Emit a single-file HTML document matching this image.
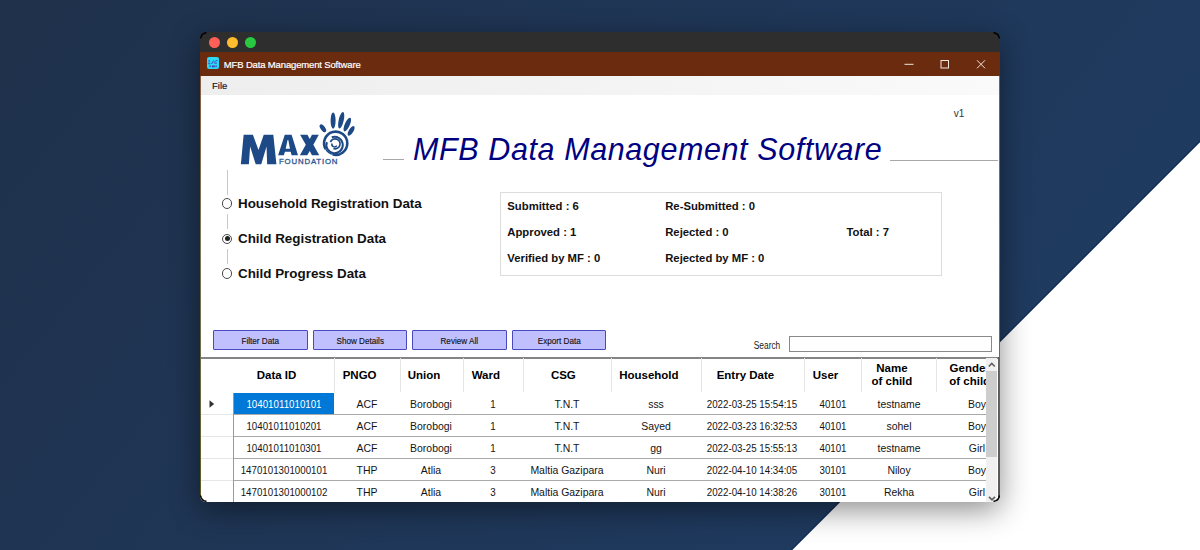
<!DOCTYPE html>
<html><head><meta charset="utf-8">
<style>
*{margin:0;padding:0;box-sizing:border-box}
html,body{width:1200px;height:550px;overflow:hidden}
body{position:relative;font-family:"Liberation Sans",sans-serif;background:linear-gradient(129deg,#1f314b,#1f3d65)}
.abs{position:absolute}
#tri{position:absolute;left:0;top:0;width:1200px;height:550px}
#win{position:absolute;left:200px;top:32px;width:800px;height:470px;background:linear-gradient(#2e2e2e 0,#2e2e2e 20px,#fff 20px);border-radius:6px;overflow:hidden;box-shadow:0 8px 30px rgba(0,0,0,0.45)}
#mac{position:absolute;left:0;top:0;width:800px;height:20px;background:#2e2e2e}
.dot{position:absolute;top:5px;width:11px;height:11px;border-radius:50%}
#tb{position:absolute;left:0;top:20px;width:800px;height:24px;background:#6b2b0e}
#menu{position:absolute;left:1px;top:44px;width:798px;height:19px;background:linear-gradient(to right,#eeeeee,#f2f2f2 40%,#fafafa)}
.t{position:absolute;white-space:nowrap;line-height:1}
.hd{font-weight:bold;font-size:11.5px;color:#000;text-align:center}
.dt{font-size:11px;color:#141414;text-align:center;transform:scaleX(0.885)}
.dt.sel{color:#fff}
.rb{font-weight:bold;font-size:13.4px;color:#111}
.st{font-weight:bold;font-size:11.3px;color:#111}
.btn{position:absolute;top:298.2px;height:19.8px;width:94.5px;background:#c0c0ff;border:1px solid #4a4ac0;border-radius:1px}
.btn span{position:absolute;left:0;right:0;top:4.8px;text-align:center;font-size:9.8px;color:#111;line-height:1;transform:scaleX(0.83);-webkit-text-stroke:0.15px #111}
.radio{position:absolute;width:10.4px;height:10.4px;border:1px solid #4a4a4a;border-radius:50%;background:#fff}
.vl{position:absolute;left:27px;width:1px;background:#c8c8c8}
</style></head><body>
<svg id="tri" viewBox="0 0 1200 550"><line x1="1201" y1="140.3" x2="790.3" y2="551" stroke="#142c55" stroke-width="1.5"/><polygon points="1200,142.3 1200,550 792.3,550" fill="#fff"/></svg>
<div id="win">
  <div id="mac">
    <div class="dot" style="left:9px;background:#fe5f57"></div>
    <div class="dot" style="left:27px;background:#febc2e"></div>
    <div class="dot" style="left:45px;background:#28c840"></div>
  </div>
  <div id="tb">
    <svg class="abs" style="left:7px;top:5px" width="12" height="12" viewBox="0 0 12 12"><rect x="0" y="0" width="12" height="12" rx="2" fill="#2ad9f8"/><g fill="none" stroke="#4a40b8" stroke-width="0.9"><path d="M2,3 L2.3,5.2 M1.5,5.8 A0.8,0.8 0 1 0 3,6"/><path d="M4.5,7 L6.5,3.5"/><path d="M6.8,6 Q8.5,3 10.5,3.5 M7.5,6.3 L10,6"/></g><g fill="#4a40b8"><rect x="2.5" y="8.3" width="1.2" height="1.8"/><rect x="4.8" y="8.5" width="3" height="1.8"/><rect x="8.5" y="8.3" width="1.2" height="1.8"/></g></svg>
    <div class="t" style="left:23.8px;top:7.5px;font-size:9.5px;letter-spacing:-0.15px;color:#fff;-webkit-text-stroke:0.2px #fff">MFB Data Management Software</div>
    <svg class="abs" style="left:700px;top:0" width="100" height="24">
      <line x1="704.5" y1="12.3" x2="713.5" y2="12.3" stroke="#f0e6e0" stroke-width="1" transform="translate(-700 0)"/>
      <rect x="41" y="8.5" width="7.5" height="7.5" fill="none" stroke="#f0e6e0" stroke-width="1"/>
      <path d="M77,8.3 L85,16.3 M85,8.3 L77,16.3" stroke="#f0e6e0" stroke-width="1"/>
    </svg>
  </div>
  <div id="menu">
    <div class="t" style="left:11px;top:4.8px;font-size:9.5px;color:#101028;-webkit-text-stroke:0.15px #101028">File</div>
  </div>
  <svg class="abs" style="left:0;top:0" width="800" height="200" viewBox="200 32 800 200">
<g fill="#1d4a87">
<polygon points="240.86,164.16 243.64,134.78 252.91,134.78 258.48,149.93 263.74,134.78 273.32,134.78 276.41,164.16 267.14,164.16 266.52,146.53 261.26,164.16 255.70,164.16 250.13,146.53 248.89,164.16"/>
<path fill-rule="evenodd" d="M278.13,155.17 L284.75,134.84 L291.6,134.84 L297.99,155.17 L291.6,155.17 L290.66,151.86 L284.98,151.86 L283.8,155.17 Z M285.69,148.78 L287.58,140.04 L288.29,140.04 L289.95,148.78 Z"/>
<polygon points="300.11,134.84 307.44,134.84 309.8,139.09 311.93,134.84 318.79,134.84 313.35,144.77 319.26,155.17 311.93,155.17 309.8,150.91 307.2,155.17 299.88,155.17 305.79,144.77"/>
<ellipse cx="322.9" cy="128.3" rx="2.3" ry="4.5" transform="rotate(-35 322.9 128.3)"/>
<ellipse cx="333.1" cy="120.6" rx="2.5" ry="8.1"/>
<ellipse cx="341.2" cy="120.3" rx="2.5" ry="8.4" transform="rotate(13 341.2 120.3)"/>
<ellipse cx="347.3" cy="124.6" rx="2.5" ry="7.4" transform="rotate(24 347.3 124.6)"/>
<ellipse cx="351.1" cy="130.9" rx="2.3" ry="5.5" transform="rotate(32 351.1 130.9)"/>
</g>
<g fill="none" stroke="#1d4a87">
<path d="M325.65,149.1 A11.6,11.6 0 1 1 332.7,154.5" stroke-width="2.6"/>
<path d="M332.7,154.5 A11.6,11.6 0 0 1 325.65,149.1" stroke-width="1.2"/>
<path d="M331.8,137.29 A8.2,8.2 0 1 1 326.89,142.2" stroke-width="2.0"/>
<path d="M330.4,142.09 A5.0,5.0 0 1 1 333.39,148.5" stroke-width="1.7"/>
<path d="M336.75,145.6 A2.6,2.6 0 0 1 332.06,143.41" stroke-width="1.5"/>
</g>
<text x="279" y="164.3" font-family="Liberation Sans" font-size="7.8" fill="#2a5591" stroke="#2a5591" stroke-width="0.3" textLength="58.5" lengthAdjust="spacing">FOUNDATION</text>
</svg>

  <div class="abs" style="left:183px;top:127px;width:21px;height:1px;background:#a8a8a8"></div>
  <div class="t" style="left:213px;top:101.8px;font-size:30.5px;letter-spacing:0.6px;font-style:italic;color:#000080">MFB Data Management Software</div>
  <div class="abs" style="left:690px;top:128px;width:108px;height:1px;background:#a8a8a8"></div>
  <div class="t" style="left:753.8px;top:77px;font-size:10px;color:#333">v1</div>

  <div class="vl" style="top:137.5px;height:25px"></div>
  <div class="vl" style="top:182px;height:14.5px"></div>
  <div class="vl" style="top:217px;height:15px"></div>
  <div class="radio" style="left:22.1px;top:166.4px"></div>
  <div class="radio" style="left:22.1px;top:201.6px"><div class="abs" style="left:1.7px;top:1.7px;width:5px;height:5px;border-radius:50%;background:#222"></div></div>
  <div class="radio" style="left:22.1px;top:236.3px"></div>
  <div class="t rb" style="left:38px;top:165.3px">Household Registration Data</div>
  <div class="t rb" style="left:38px;top:200.3px">Child Registration Data</div>
  <div class="t rb" style="left:38px;top:234.8px">Child Progress Data</div>

  <div class="abs" style="left:300px;top:160px;width:442px;height:84px;border:1px solid #dcdcdc"></div>
  <div class="t st" style="left:307.3px;top:168.5px">Submitted : 6</div>
  <div class="t st" style="left:465.2px;top:168.5px">Re-Submitted : 0</div>
  <div class="t st" style="left:307.3px;top:194.5px">Approved : 1</div>
  <div class="t st" style="left:465.2px;top:194.5px">Rejected : 0</div>
  <div class="t st" style="left:646.5px;top:194.5px">Total : 7</div>
  <div class="t st" style="left:307.3px;top:220.5px">Verified by MF : 0</div>
  <div class="t st" style="left:465.2px;top:220.5px">Rejected by MF : 0</div>

  <div class="btn" style="left:13.3px"><span>Filter Data</span></div>
  <div class="btn" style="left:112.7px"><span>Show Details</span></div>
  <div class="btn" style="left:212.3px"><span>Review All</span></div>
  <div class="btn" style="left:311.5px"><span>Export Data</span></div>
  <div class="t" style="left:550px;top:308.5px;width:34px;text-align:center;font-size:10px;transform:scaleX(0.835);color:#222">Search</div>
  <div class="abs" style="left:588.5px;top:304px;width:203px;height:16px;border:1px solid #8a8a8a;background:#fff"></div>
  <div id="grid" class="abs" style="left:1px;top:325px;width:798px;height:145px;overflow:hidden">
<div class="abs" style="left:0;top:0;width:800px;height:2px;background:#858585"></div>
<div class="t hd" style="left:15.549999999999997px;width:120px;top:12.600000000000001px">Data ID</div>
<div class="abs" style="left:132.6px;top:1px;width:1px;height:34px;background:#e4e4e4"></div>
<div class="t hd" style="left:98.6px;width:120px;top:12.600000000000001px">PNGO</div>
<div class="abs" style="left:198.6px;top:1px;width:1px;height:34px;background:#e4e4e4"></div>
<div class="t hd" style="left:163.05px;width:120px;top:12.600000000000001px">Union</div>
<div class="abs" style="left:261.5px;top:1px;width:1px;height:34px;background:#e4e4e4"></div>
<div class="t hd" style="left:224.85000000000002px;width:120px;top:12.600000000000001px">Ward</div>
<div class="abs" style="left:322.2px;top:1px;width:1px;height:34px;background:#e4e4e4"></div>
<div class="t hd" style="left:302.35px;width:120px;top:12.600000000000001px">CSG</div>
<div class="abs" style="left:409.5px;top:1px;width:1px;height:34px;background:#e4e4e4"></div>
<div class="t hd" style="left:387.9px;width:120px;top:12.600000000000001px">Household</div>
<div class="abs" style="left:500.3px;top:1px;width:1px;height:34px;background:#e4e4e4"></div>
<div class="t hd" style="left:484.45000000000005px;width:120px;top:12.600000000000001px">Entry Date</div>
<div class="abs" style="left:602.6px;top:1px;width:1px;height:34px;background:#e4e4e4"></div>
<div class="t hd" style="left:564.5px;width:120px;top:12.600000000000001px">User</div>
<div class="abs" style="left:660.4px;top:1px;width:1px;height:34px;background:#e4e4e4"></div>
<div class="t hd" style="left:630.9px;width:120px;top:6.3px">Name</div>
<div class="t hd" style="left:630.9px;width:120px;top:19.3px">of child</div>
<div class="abs" style="left:735.4px;top:1px;width:1px;height:34px;background:#e4e4e4"></div>
<div class="t hd" style="left:708.7px;width:120px;top:6.3px">Gender</div>
<div class="t hd" style="left:708.7px;width:120px;top:19.3px">of child</div>
<div class="abs" style="left:0;top:57.0px;width:32.5px;height:1px;background:#e6e6e6"></div>
<div class="abs" style="left:32.5px;top:57.0px;width:752.5px;height:1px;background:#a9a9a9"></div>
<div class="abs" style="left:32.5px;top:36.0px;width:100.10000000000002px;height:21px;background:#0078d7"></div>
<div class="t dt sel" style="left:12.549999999999997px;width:140px;top:41.5px;transform:scaleX(0.885)">10401011010101</div>
<div class="t dt " style="left:95.6px;width:140px;top:41.5px;transform:scaleX(0.95)">ACF</div>
<div class="t dt " style="left:160.05px;width:140px;top:41.5px;transform:scaleX(0.95)">Borobogi</div>
<div class="t dt " style="left:221.85000000000002px;width:140px;top:41.5px;transform:scaleX(0.885)">1</div>
<div class="t dt " style="left:295.85px;width:140px;top:41.5px;transform:scaleX(0.95)">T.N.T</div>
<div class="t dt " style="left:384.9px;width:140px;top:41.5px;transform:scaleX(0.95)">sss</div>
<div class="t dt " style="left:481.45000000000005px;width:140px;top:41.5px;transform:scaleX(0.885)">2022-03-25 15:54:15</div>
<div class="t dt " style="left:561.5px;width:140px;top:41.5px;transform:scaleX(0.885)">40101</div>
<div class="t dt " style="left:627.9px;width:140px;top:41.5px;transform:scaleX(0.95)">testname</div>
<div class="t dt " style="left:705.7px;width:140px;top:41.5px;transform:scaleX(0.95)">Boy</div>
<div class="abs" style="left:0;top:79.0px;width:32.5px;height:1px;background:#e6e6e6"></div>
<div class="abs" style="left:32.5px;top:79.0px;width:752.5px;height:1px;background:#a9a9a9"></div>
<div class="t dt " style="left:12.549999999999997px;width:140px;top:63.5px;transform:scaleX(0.885)">10401011010201</div>
<div class="t dt " style="left:95.6px;width:140px;top:63.5px;transform:scaleX(0.95)">ACF</div>
<div class="t dt " style="left:160.05px;width:140px;top:63.5px;transform:scaleX(0.95)">Borobogi</div>
<div class="t dt " style="left:221.85000000000002px;width:140px;top:63.5px;transform:scaleX(0.885)">1</div>
<div class="t dt " style="left:295.85px;width:140px;top:63.5px;transform:scaleX(0.95)">T.N.T</div>
<div class="t dt " style="left:384.9px;width:140px;top:63.5px;transform:scaleX(0.95)">Sayed</div>
<div class="t dt " style="left:481.45000000000005px;width:140px;top:63.5px;transform:scaleX(0.885)">2022-03-23 16:32:53</div>
<div class="t dt " style="left:561.5px;width:140px;top:63.5px;transform:scaleX(0.885)">40101</div>
<div class="t dt " style="left:627.9px;width:140px;top:63.5px;transform:scaleX(0.95)">sohel</div>
<div class="t dt " style="left:705.7px;width:140px;top:63.5px;transform:scaleX(0.95)">Boy</div>
<div class="abs" style="left:0;top:101.0px;width:32.5px;height:1px;background:#e6e6e6"></div>
<div class="abs" style="left:32.5px;top:101.0px;width:752.5px;height:1px;background:#a9a9a9"></div>
<div class="t dt " style="left:12.549999999999997px;width:140px;top:85.5px;transform:scaleX(0.885)">10401011010301</div>
<div class="t dt " style="left:95.6px;width:140px;top:85.5px;transform:scaleX(0.95)">ACF</div>
<div class="t dt " style="left:160.05px;width:140px;top:85.5px;transform:scaleX(0.95)">Borobogi</div>
<div class="t dt " style="left:221.85000000000002px;width:140px;top:85.5px;transform:scaleX(0.885)">1</div>
<div class="t dt " style="left:295.85px;width:140px;top:85.5px;transform:scaleX(0.95)">T.N.T</div>
<div class="t dt " style="left:384.9px;width:140px;top:85.5px;transform:scaleX(0.95)">gg</div>
<div class="t dt " style="left:481.45000000000005px;width:140px;top:85.5px;transform:scaleX(0.885)">2022-03-25 15:55:13</div>
<div class="t dt " style="left:561.5px;width:140px;top:85.5px;transform:scaleX(0.885)">40101</div>
<div class="t dt " style="left:627.9px;width:140px;top:85.5px;transform:scaleX(0.95)">testname</div>
<div class="t dt " style="left:705.7px;width:140px;top:85.5px;transform:scaleX(0.95)">Girl</div>
<div class="abs" style="left:0;top:123.0px;width:32.5px;height:1px;background:#e6e6e6"></div>
<div class="abs" style="left:32.5px;top:123.0px;width:752.5px;height:1px;background:#a9a9a9"></div>
<div class="t dt " style="left:12.549999999999997px;width:140px;top:107.5px;transform:scaleX(0.885)">1470101301000101</div>
<div class="t dt " style="left:95.6px;width:140px;top:107.5px;transform:scaleX(0.95)">THP</div>
<div class="t dt " style="left:160.05px;width:140px;top:107.5px;transform:scaleX(0.95)">Atlia</div>
<div class="t dt " style="left:221.85000000000002px;width:140px;top:107.5px;transform:scaleX(0.885)">3</div>
<div class="t dt " style="left:295.85px;width:140px;top:107.5px;transform:scaleX(0.95)">Maltia Gazipara</div>
<div class="t dt " style="left:384.9px;width:140px;top:107.5px;transform:scaleX(0.95)">Nuri</div>
<div class="t dt " style="left:481.45000000000005px;width:140px;top:107.5px;transform:scaleX(0.885)">2022-04-10 14:34:05</div>
<div class="t dt " style="left:561.5px;width:140px;top:107.5px;transform:scaleX(0.885)">30101</div>
<div class="t dt " style="left:627.9px;width:140px;top:107.5px;transform:scaleX(0.95)">Niloy</div>
<div class="t dt " style="left:705.7px;width:140px;top:107.5px;transform:scaleX(0.95)">Boy</div>
<div class="abs" style="left:0;top:145.0px;width:32.5px;height:1px;background:#e6e6e6"></div>
<div class="abs" style="left:32.5px;top:145.0px;width:752.5px;height:1px;background:#a9a9a9"></div>
<div class="t dt " style="left:12.549999999999997px;width:140px;top:129.5px;transform:scaleX(0.885)">1470101301000102</div>
<div class="t dt " style="left:95.6px;width:140px;top:129.5px;transform:scaleX(0.95)">THP</div>
<div class="t dt " style="left:160.05px;width:140px;top:129.5px;transform:scaleX(0.95)">Atlia</div>
<div class="t dt " style="left:221.85000000000002px;width:140px;top:129.5px;transform:scaleX(0.885)">3</div>
<div class="t dt " style="left:295.85px;width:140px;top:129.5px;transform:scaleX(0.95)">Maltia Gazipara</div>
<div class="t dt " style="left:384.9px;width:140px;top:129.5px;transform:scaleX(0.95)">Nuri</div>
<div class="t dt " style="left:481.45000000000005px;width:140px;top:129.5px;transform:scaleX(0.885)">2022-04-10 14:38:26</div>
<div class="t dt " style="left:561.5px;width:140px;top:129.5px;transform:scaleX(0.885)">30101</div>
<div class="t dt " style="left:627.9px;width:140px;top:129.5px;transform:scaleX(0.95)">Rekha</div>
<div class="t dt " style="left:705.7px;width:140px;top:129.5px;transform:scaleX(0.95)">Girl</div>
<div class="abs" style="left:32.0px;top:35.5px;width:1px;height:200px;background:#9a9a9a"></div>
<svg class="abs" style="left:8px;top:43px" width="6" height="8"><polygon points="0.5,0.3 5.2,4 0.5,7.7" fill="#333"/></svg>
<div class="abs" style="left:785px;top:1px;width:11px;height:150px;background:#f0f0f0"></div>
<div class="abs" style="left:785px;top:14px;width:11px;height:86px;background:#cdcdcd"></div>
<svg class="abs" style="left:785px;top:4px" width="11" height="8"><polyline points="2.8,5.5 5.8,2.5 8.8,5.5" fill="none" stroke="#606060" stroke-width="1.6"/></svg>
<svg class="abs" style="left:785px;top:138px" width="11" height="8"><polyline points="3,1.8 6,4.8 9,1.8" fill="none" stroke="#606060" stroke-width="1.7"/></svg>
<div class="abs" style="left:797.3px;top:0;width:1px;height:150px;background:#5a5a5a"></div>
</div>
  <div class="abs" style="left:0;top:44px;width:1px;height:426px;background:linear-gradient(#8c5c3c,#7a7a5a 40%,#5e5a22)"></div>
  <div class="abs" style="left:799px;top:44px;width:1px;height:426px;background:linear-gradient(#8c5c3c,#7a7a5a 40%,#5e5a22)"></div>
  <svg class="abs" style="left:0;top:0" width="800" height="470">
    <g fill="none" stroke="#000" stroke-width="1.6">
      <path d="M0.6,6.5 A6,6 0 0 1 6.5,0.6"/>
      <path d="M793.5,0.6 A6,6 0 0 1 799.4,6.5"/>
      <path d="M0.6,463.5 A6,6 0 0 0 6.5,469.4"/>
      <path d="M793.5,469.4 A6,6 0 0 0 799.4,463.5"/>
    </g>
  </svg>
</div>
</body></html>
